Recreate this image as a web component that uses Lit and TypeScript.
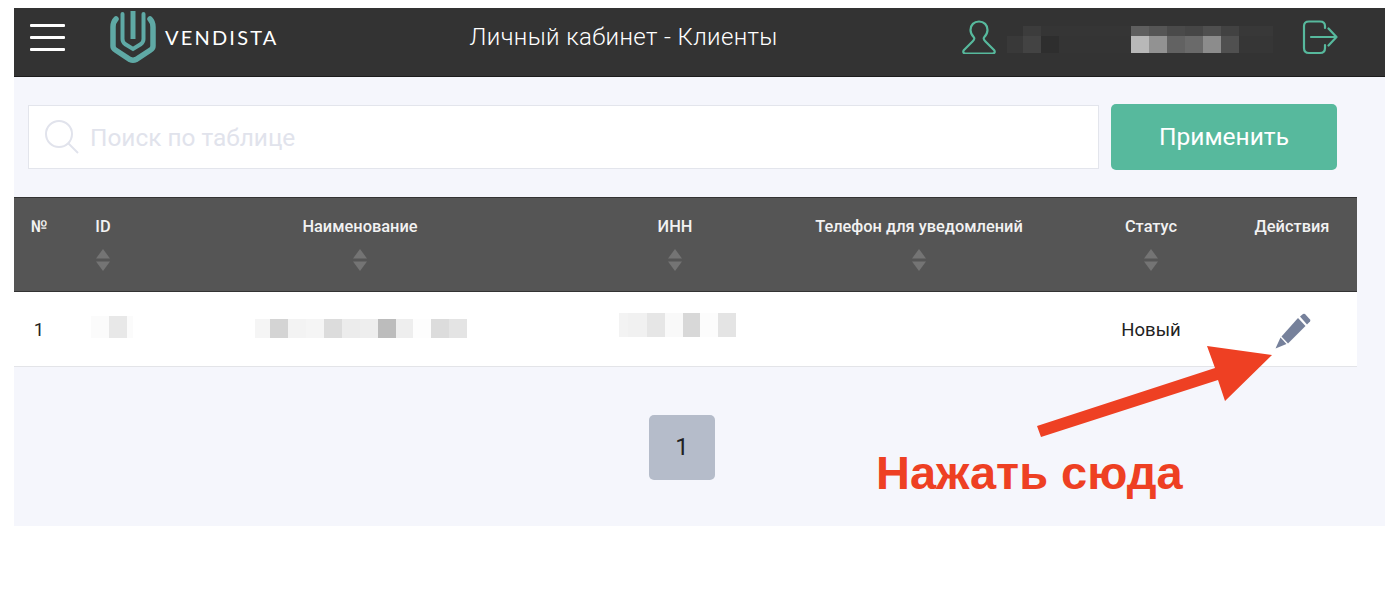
import { LitElement, html, css } from "lit";
import { customElement } from "lit/decorators.js";

type Cell = [number, string];

const blocks = (cells: Cell[], cls = "") =>
  html`<span class="blocks ${cls}">${cells.map(
    ([w, c]) => html`<i style="width:${w}px;background:${c}"></i>`
  )}</span>`;

const sorter = html`<svg class="sort" width="14" height="22" viewBox="0 0 14 22">
  <path d="M7 0L14 9.500H0Z" fill="#747474" /><path d="M0 12.500H14L7 22Z" fill="#747474" />
</svg>`;

const columns: [string, boolean][] = [
  ["№", false],
  ["ID", true],
  ["Наименование", true],
  ["ИНН", true],
  ["Телефон для уведомлений", true],
  ["Статус", true],
  ["Действия", false],
];

@customElement("app-root")
export class AppRoot extends LitElement {
  static styles = css`
    :host { display: block; padding: 8px 14px 0; font-family: Roboto, "Noto Sans", sans-serif; color: #222; }
    .page { width: 1371px; height: 518px; background: #f5f6fc; position: relative; }
    header { height: 69px; box-sizing: border-box; padding-bottom: 10px; background: #333; border-bottom: 1px solid #1c1c1c; display: flex; align-items: center; color: #fff; }
    .burger { margin-left: 16px; width: 35px; display: flex; flex-direction: column; gap: 9px; }
    .burger i { display: block; height: 3px; background: #fff; border-radius: 1px; }
    .logo { margin: 1px 0 0 43px; align-self: flex-start; display: block; }
    .brand { margin-left: 7px; font-family: Lato, sans-serif; font-size: 20px; letter-spacing: 2.2px; font-weight: 400; }
    .title { margin-left: 191px; font-size: 24px; font-weight: 300; letter-spacing: 0.37px; width: 492px; white-space: nowrap; }
    .user { display: block; }
    .censor { margin-left: 11px; display: flex; flex-direction: column; margin-top: 5px; }
    .blocks { display: flex; }
    .blocks i { display: block; height: 100%; }
    .a { height: 10px; }
    .b { height: 17px; }
    .exit { margin-left: 29px; display: block; }
    .search { display: flex; gap: 12px; align-items: center; padding: 27px 0 0 14px; height: 65px; }
    .field { width: 1071px; height: 64px; box-sizing: border-box; background: #fff; border: 1px solid #e3e5ec; display: flex; align-items: center; padding-left: 15px; gap: 10px; font-size: 24.4px; font-weight: 400; color: #e1e3ec; }
    .field span { margin-top: 2px; }
    .apply { width: 226px; height: 66px; border: 0; border-radius: 5px; background: #57b99d; color: #fff; font: 400 24.5px Roboto, sans-serif; padding: 0; }
    .grid { display: grid; grid-template-columns: 50px 78px 436px 194px 294px 170px 112px; width: 1343px; }
    .head { margin-top: 28px; height: 95px; box-sizing: border-box; background: #555; border-top: 1px solid #333; border-bottom: 1px solid #333; color: #f2f2f2; font-size: 16.4px; font-weight: 500; }
    .head > div { display: flex; flex-direction: column; align-items: center; padding-top: 20px; gap: 13px; white-space: nowrap; line-height: 18px; }
    .row { height: 75px; background: #fff; border-bottom: 1px solid #e3e4e8; box-sizing: border-box; align-items: center; font-size: 18.5px; }
    .row > div { display: flex; justify-content: center; align-items: center; height: 100%; }
    .row > .masked { justify-content: flex-start; align-items: flex-start; }
    .row span.val { margin-top: 2px; }
    .mask-id { margin: 24px 0 0 27px; height: 22px; }
    .mask-name { margin: 27px 0 0 113px; height: 19px; }
    .mask-inn { margin: 21px 0 0 41px; height: 24px; }
    .pencil { margin: 4px 0 0 2px; display: block; }
    .pager { display: flex; justify-content: center; margin-top: 48px; width: 1336px; }
    .page-btn { width: 66px; height: 65px; border-radius: 5px; background: #b5bcca; display: flex; align-items: center; justify-content: center; font-size: 24px; font-weight: 400; color: #222; padding-bottom: 2px; box-sizing: border-box; }
    .overlay { position: absolute; left: 0; top: 0; pointer-events: none; }
    .callout { position: absolute; left: 862px; top: 436px; font: 700 47px/58px "Liberation Sans", Arial, sans-serif; color: #ee4023; white-space: nowrap; }
  `;

  render() {
    return html`<div class="page">
      <header>
        <div class="burger"><i></i><i></i><i></i></div>
        <svg class="logo" width="50" height="56" viewBox="0 0 50 56" fill="none" stroke="#5fa9a5" stroke-linecap="round">
          <path d="M25 2V30" stroke-width="5" stroke-linecap="butt" />
          <path d="M14.500 5V30Q14.500 33 17 35L25 40L33 35Q35.500 33 35.500 30V5" stroke-width="4" />
          <path d="M8 10Q5 13 5 18V37Q5 39.500 7.500 41L22 50.500Q25 52 28 50.500L42.500 41Q45 39.500 45 37V18Q45 13 42 10" stroke-width="5.500" />
        </svg>
        <span class="brand">VENDISTA</span>
        <span class="title">Личный кабинет - Клиенты</span>
        <svg class="user" width="34" height="34" viewBox="0 0 34 34" fill="none" stroke="#57b99d" stroke-width="2.200" stroke-linejoin="round">
          <path d="M17 1.500C12 1.500 8.500 5 8.500 10C8.500 13.500 10.500 16 12 17.500C13 19 12 20 10.500 21.500L2 30C.5 32 1.500 33.500 3.500 33.500H30.500C32.500 33.500 33.500 32 32 30L23.500 21.500C22 20 21 19 22 17.500C23.500 16 25.500 13.500 25.500 10C25.500 5 22 1.500 17 1.500Z" />
        </svg>
        <div class="censor">
          ${blocks([[16,"#333"],[18,"#3c3c3c"],[90,"#353535"],[18,"#5f5f5f"],[18,"#555"],[18,"#4a4a4a"],[18,"#464646"],[18,"#4f4f4f"],[18,"#424242"],[34,"#383838"]], "a")}
          ${blocks([[16,"#393939"],[18,"#434343"],[18,"#2e2e2e"],[72,"#343434"],[18,"#b8b8b8"],[18,"#929292"],[18,"#626262"],[18,"#6a6a6a"],[18,"#8c8c8c"],[18,"#505050"],[34,"#363636"]], "b")}
        </div>
        <svg class="exit" width="36" height="36" viewBox="0 0 36 36" fill="none" stroke="#57b99d" stroke-width="2.200" stroke-linecap="round" stroke-linejoin="round">
          <path d="M23 9V7Q23 2.500 18 2.500H7Q2 2.500 2 7V29Q2 34 7 34H18Q23 34 23 29V26" />
          <path d="M9 18H34.500M26.500 9.500L34.500 18L26.500 26.500" />
        </svg>
      </header>
      <div class="search">
        <div class="field">
          <svg width="36" height="36" viewBox="0 0 36 36" fill="none" stroke="#e1e3ec" stroke-width="2">
            <circle cx="15" cy="15" r="13" /><path d="M24.500 24.500L34 34" />
          </svg>
          <span>Поиск по таблице</span>
        </div>
        <button class="apply">Применить</button>
      </div>
      <div class="grid head">
        ${columns.map(([label, sort]) => html`<div><span>${label}</span>${sort ? sorter : null}</div>`)}
      </div>
      <div class="grid row">
        <div><span class="val">1</span></div>
        <div class="masked">${blocks([[18,"#fbfbfb"],[18,"#e8e8e8"],[6,"#fbfbfb"]], "mask-id")}</div>
        <div class="masked">${blocks([[15,"#f5f5f5"],[18,"#d4d4d4"],[18,"#f3f3f3"],[18,"#f5f5f5"],[18,"#dcdcdc"],[18,"#ececec"],[18,"#eeeeee"],[18,"#bcbcbc"],[17,"#eeeeee"],[18,"#fdfdfd"],[18,"#dcdcdc"],[18,"#e4e4e4"]], "mask-name")}</div>
        <div class="masked">${blocks([[9,"#f3f3f3"],[19,"#f1f1f1"],[18,"#e6e6e6"],[18,"#f9f9f9"],[17,"#d8d8d8"],[18,"#fcfcfc"],[18,"#e4e4e4"]], "mask-inn")}</div>
        <div></div>
        <div><span class="val">Новый</span></div>
        <div>
          <svg class="pencil" width="36" height="36" viewBox="0 0 36 36" fill="#76819b">
            <path d="M0.500 35.500L5.500 24.500L11.500 31Z" />
            <path d="M6.500 23.500L23 5L30.500 13L13 30.500Z" />
            <path d="M25 3.500L28 1Q29 .3 30 1L35 6.500Q35.700 7.500 35 8.500L32 11.500Z" />
          </svg>
        </div>
      </div>
      <div class="pager"><div class="page-btn">1</div></div>
      <svg class="overlay" width="1371" height="518" viewBox="0 0 1371 518">
        <path d="M1023 418L1201 360L1193 338L1258 347L1211 393L1204 372L1027 429Z" fill="#ee4023"/>
      </svg>
      <div class="callout">Нажать сюда</div>
    </div>`;
  }
}
